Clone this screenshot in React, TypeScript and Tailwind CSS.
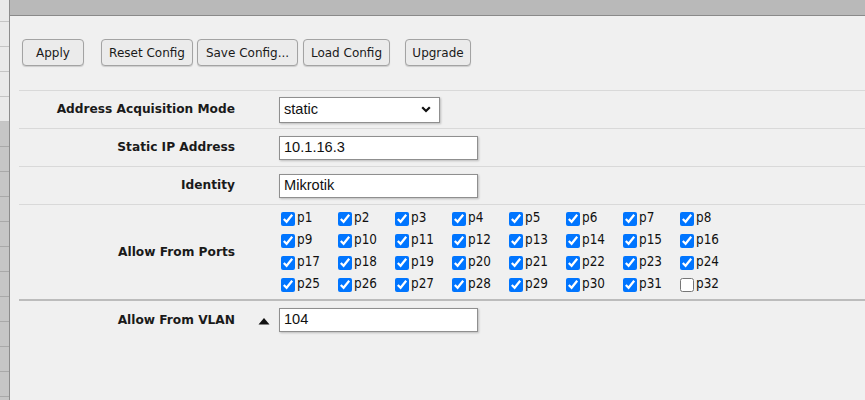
import React from "react";

const ports = Array.from({ length: 32 }, (_, i) => i + 1);

function Btn({ label, w }: { label: string; w: string }) {
  return (
    <div
      className={`${w} h-[27px] flex-none flex items-center justify-center rounded-[4px] border border-[#a3a3a3] bg-[#ebebeb] text-[12px] text-[#1a1a1a] shadow-[0_1px_1px_rgba(0,0,0,0.15)]`}
    >
      {label}
    </div>
  );
}

function Row({
  label,
  mid,
  children,
  h = "h-[38px]",
  border = "border-t border-[#d9d9d9]",
}: {
  label: string;
  mid?: React.ReactNode;
  children: React.ReactNode;
  h?: string;
  border?: string;
}) {
  return (
    <div className={`flex items-center ${h} ${border}`}>
      <div className="w-[216px] flex-none text-right font-bold text-[12.2px] text-[#1a1a1a]">{label}</div>
      <div className="w-[44px] flex-none flex justify-end pr-[9px]">{mid}</div>
      <div className="flex-none">{children}</div>
    </div>
  );
}

function TextBox({ value, w = "w-[199px]", h = "h-[24px]" }: { value: string; w?: string; h?: string }) {
  return (
    <div
      className={`${w} ${h} flex items-center border border-[#8f8f8f] bg-white px-[4px] text-[14.6px] text-[#111] shadow-[1px_1px_2px_rgba(0,0,0,0.22)]`}
      style={{ fontFamily: '"Liberation Sans", Arial, sans-serif' }}
    >
      {value}
    </div>
  );
}

export default function App() {
  return (
    <div
      className="flex h-[400px] w-[865px] overflow-hidden bg-[#f0f0f0]"
      style={{ fontFamily: '"DejaVu Sans", Verdana, sans-serif' }}
    >
      {/* left strip */}
      <div className="w-[10px] flex-none flex flex-col border-r border-[#8c8c8c]">
        <div className="h-[22px] flex-none border-b border-[#c4c4c4] bg-[#e9e9e9]" />
        {[0, 1, 2, 3].map((i) => (
          <div key={"l" + i} className="h-[25px] flex-none border-b border-[#c4c4c4] bg-[#e9e9e9]" />
        ))}
        {Array.from({ length: 12 }).map((_, i) => (
          <div key={"d" + i} className="h-[25px] flex-none border-b border-[#a9a9a9] bg-[#c6c6c6]" />
        ))}
      </div>

      {/* main */}
      <div className="flex-1 flex flex-col">
        <div className="h-[16px] flex-none bg-[#b9b9b9] border-b border-[#8a8a8a]" />
        <div className="pl-[9px]">
          <div className="flex items-center pt-[23px] pb-[24px] pl-[3px]">
            <Btn label="Apply" w="w-[62px]" />
            <div className="w-[17px]" />
            <Btn label="Reset Config" w="w-[92px]" />
            <div className="w-[4px]" />
            <Btn label="Save Config..." w="w-[101px]" />
            <div className="w-[5px]" />
            <Btn label="Load Config" w="w-[87px]" />
            <div className="w-[15px]" />
            <Btn label="Upgrade" w="w-[66px]" />
          </div>

          <Row label="Address Acquisition Mode">
            <div
              className="w-[161px] h-[26px] flex items-center justify-between border border-[#8f8f8f] bg-white pl-[4px] pr-[8px] text-[14.6px] text-[#111] shadow-[1px_1px_2px_rgba(0,0,0,0.22)]"
              style={{ fontFamily: '"Liberation Sans", Arial, sans-serif' }}
            >
              <span>static</span>
              <svg width="10" height="7" viewBox="0 0 10 7">
                <polyline points="1.2,1.2 5,5 8.8,1.2" fill="none" stroke="#111" strokeWidth="2.2" />
              </svg>
            </div>
          </Row>
          <Row label="Static IP Address">
            <TextBox value="10.1.16.3" />
          </Row>
          <Row label="Identity">
            <TextBox value="Mikrotik" />
          </Row>
          <Row label="Allow From Ports" h="h-[95px]">
            <div className="grid grid-cols-[repeat(8,57px)] pl-[2px] pb-[1px]">
              {ports.map((p) => (
                <div key={p} className="h-[22px] flex items-center">
                  <input
                    type="checkbox"
                    defaultChecked={p !== 32}
                    className="m-0 w-[14px] h-[14px] accent-[#0075ff]"
                  />
                  <span
                    className="ml-[2px] text-[13.4px] text-[#111]"
                    style={{ fontFamily: '"DejaVu Sans Condensed", "DejaVu Sans", sans-serif' }}
                  >
                    p{p}
                  </span>
                </div>
              ))}
            </div>
          </Row>
          <Row
            label="Allow From VLAN"
            h="h-[40px]"
            border="border-t-[2px] border-[#bcbcbc]"
            mid={
              <svg width="12" height="8" viewBox="0 0 12 8" className="mt-[1px]">
                <polygon points="0.5,7.5 6,1 11.5,7.5" fill="#111" />
              </svg>
            }
          >
            <TextBox value="104" />
          </Row>
        </div>
      </div>
    </div>
  );
}
